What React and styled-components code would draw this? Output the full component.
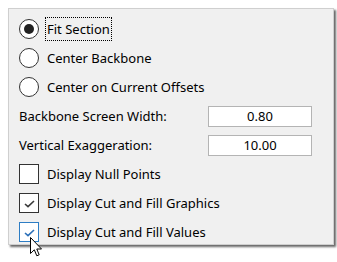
import React from "react";
import styled, { createGlobalStyle, css } from "styled-components";

const Global = createGlobalStyle`
  html, body { margin: 0; background: #fff; }
  body {
    width: 337px;
    height: 262px;
    overflow: hidden;
    position: relative;
    font-family: "Segoe UI", "Noto Sans", "Open Sans", sans-serif;
    font-size: 13px;
    color: #000;
  }
`;

const Stage = styled.div`
  position: relative;
  padding: 8px 0 0 8px;
`;

const Panel = styled.div`
  width: 314px;
  height: 225px;
  padding: 10px 0 0 10px;
  background: #f0f0f0;
  border: 1px solid #cfcfcf;
  box-shadow: 2px 2px 2px rgba(0, 0, 0, 0.6);
  display: flex;
  flex-direction: column;
  gap: 9px;
`;

const Row = styled.div`
  height: 20px;
  display: flex;
  align-items: center;
  gap: ${(p) => p.$gap ?? 8}px;
`;

const Radio = styled.span`
  width: 20px;
  height: 20px;
  box-sizing: border-box;
  border-radius: 50%;
  border: 1.5px solid #333;
  background: #fff;
  display: flex;
  align-items: center;
  justify-content: center;
  flex: none;
  ${(p) =>
    p.$on &&
    css`
      &::after {
        content: "";
        width: 10px;
        height: 10px;
        border-radius: 50%;
        background: #222;
      }
    `}
`;

const Label = styled.span`
  white-space: nowrap;
  line-height: 18px;
  padding: 2px 1px;
  border: 1px dotted ${(p) => (p.$focus ? "#000" : "transparent")};
  margin-left: -2px;
`;

const FieldLabel = styled.span`
  width: 189px;
  white-space: nowrap;
  flex: none;
`;

const Input = styled.div`
  width: 104px;
  height: 21px;
  box-sizing: border-box;
  flex: none;
  background: #fff;
  border: 1px solid #b4b4b4;
  display: flex;
  align-items: center;
  justify-content: center;
  font-size: 13px;
`;

const Box = styled.span`
  width: 20px;
  height: 20px;
  box-sizing: border-box;
  border: 1px solid ${(p) => (p.$hover ? "#2d7dc4" : "#333")};
  background: #fff;
  display: flex;
  align-items: center;
  justify-content: center;
  flex: none;
`;

const Cursor = styled.svg`
  position: absolute;
  left: 30px;
  top: 237px;
`;

const Behind = styled.span`
  position: absolute;
  left: ${(p) => p.$x}px;
  top: ${(p) => p.$y}px;
  width: ${(p) => p.$w}px;
  height: ${(p) => p.$h}px;
  background: #7a7a7a;
  z-index: -1;
`;

const Check = ({ color }) => (
  <svg width="11" height="9" viewBox="0 0 11 9">
    <path d="M1 5 L4 7.6 L10 2" fill="none" stroke={color} strokeWidth="1.6" />
  </svg>
);

const RadioRow = ({ on, focus, children }) => (
  <Row>
    <Radio $on={on} />
    <Label $focus={focus}>{children}</Label>
  </Row>
);

const CheckRow = ({ checked, hover, children }) => (
  <Row>
    <Box $hover={hover}>
      {checked && <Check color={hover ? "#2a6fb8" : "#3a3a3a"} />}
    </Box>
    <Label>{children}</Label>
  </Row>
);

const Field = ({ label, value }) => (
  <Row $gap={0}>
    <FieldLabel>{label}</FieldLabel>
    <Input>{value}</Input>
  </Row>
);

export default function App() {
  return (
    <Stage>
      <Global />
      <Behind $x={5} $y={25} $w={2} $h={8} />
      <Behind $x={5} $y={73} $w={2} $h={27} />
      <Behind $x={327} $y={25} $w={1} $h={40} />
      <Panel>
        <RadioRow on focus>Fit Section</RadioRow>
        <RadioRow>Center Backbone</RadioRow>
        <RadioRow>Center on Current Offsets</RadioRow>
        <Field label="Backbone Screen Width:" value="0.80" />
        <Field label="Vertical Exaggeration:" value="10.00" />
        <CheckRow>Display Null Points</CheckRow>
        <CheckRow checked>Display Cut and Fill Graphics</CheckRow>
        <CheckRow checked hover>Display Cut and Fill Values</CheckRow>
      </Panel>
      <Cursor width="13" height="22" viewBox="0 0 13 22">
        <path
          d="M0.5 0.5 L0.5 16.5 L4.3 12.8 L6.8 18.8 L9.2 17.8 L6.8 12 L11.5 12 Z"
          fill="#fff"
          stroke="#000"
          strokeWidth="1"
          strokeLinejoin="round"
        />
      </Cursor>
    </Stage>
  );
}
